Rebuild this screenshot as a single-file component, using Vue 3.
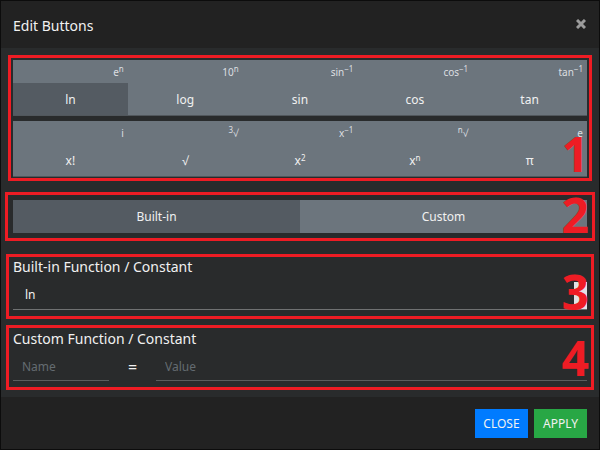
<script setup>
import { ref } from 'vue'

const keyRows = [
  [
    { shift: 'eⁿ', main: 'ln' },
    { shift: '10ⁿ', main: 'log' },
    { shift: 'sin⁻¹', main: 'sin' },
    { shift: 'cos⁻¹', main: 'cos' },
    { shift: 'tan⁻¹', main: 'tan' },
  ],
  [
    { shift: 'i', main: 'x!' },
    { shift: '³√', main: '√' },
    { shift: 'x⁻¹', main: 'x²' },
    { shift: 'ⁿ√', main: 'xⁿ' },
    { shift: 'e', main: 'π' },
  ],
]
const scripts = { 'ⁿ': 'n', '⁻': '−', '¹': '1', '²': '2', '³': '3' }

function runs(label) {
  return (label.match(/[ⁿ⁻¹²³]+|[^ⁿ⁻¹²³]+/g) || []).map((part) => ({
    raised: part[0] in scripts,
    text: [...part].map((c) => scripts[c] || c).join(''),
  }))
}

const selected = ref('ln')
const mode = ref('Built-in')
const builtin = ref('ln')
const name = ref('')
const value = ref('')
</script>

<template>
  <div class="dialog" role="dialog" aria-labelledby="dialog-title">
    <header class="header">
      <h1 id="dialog-title">Edit Buttons</h1>
      <button class="dismiss" type="button" aria-label="Close dialog">
        <svg viewBox="0 0 10 10" width="10" height="10"><path d="M1 1L9 9M9 1L1 9" /></svg>
      </button>
    </header>

    <main class="body">
      <section class="callout keys">
        <div v-for="(row, i) in keyRows" :key="i" class="key-row">
          <div v-for="key in row" :key="key.main" class="key">
            <button type="button" class="shift" :class="{ active: selected === key.shift }" @click="selected = key.shift"><component :is="r.raised ? 'sup' : 'span'" v-for="(r, n) in runs(key.shift)" :key="n">{{ r.text }}</component></button>
            <button type="button" class="main" :class="{ active: selected === key.main }" @click="selected = key.main"><component :is="r.raised ? 'sup' : 'span'" v-for="(r, n) in runs(key.main)" :key="n">{{ r.text }}</component></button>
          </div>
        </div>
        <span class="frame frame-keys"></span>
        <span class="number">1</span>
      </section>

      <section class="callout modes">
        <button v-for="m in ['Built-in', 'Custom']" :key="m" type="button" class="mode" :class="{ active: mode === m }" @click="mode = m">{{ m }}</button>
        <span class="frame frame-modes"></span>
        <span class="number">2</span>
      </section>

      <section class="callout builtin">
        <label for="builtin">Built-in Function / Constant</label>
        <div class="select">
          <select id="builtin" v-model="builtin">
            <option>ln</option>
            <option>log</option>
            <option>sin</option>
          </select>
          <span class="handle"></span>
        </div>
        <span class="frame frame-builtin"></span>
        <span class="number">3</span>
      </section>

      <section class="callout custom">
        <label for="custom-name">Custom Function / Constant</label>
        <div class="fields">
          <input id="custom-name" v-model="name" class="name" type="text" placeholder="Name" />
          <span class="equals">=</span>
          <input v-model="value" class="value" type="text" placeholder="Value" aria-label="Value" />
        </div>
        <span class="frame frame-custom"></span>
        <span class="number">4</span>
      </section>
    </main>

    <footer class="footer">
      <button type="button" class="close">CLOSE</button>
      <button type="button" class="apply">APPLY</button>
    </footer>
  </div>
</template>

<style>
body {
  margin: 0;
  background: #222222;
}
</style>

<style scoped>
* {
  box-sizing: border-box;
}
.dialog {
  display: flex;
  flex-direction: column;
  min-height: 100vh;
  border: 1px solid #0c0c0c;
  background: #222222;
  color: #f1f1f1;
  font: 12px/16px "Noto Sans", "Open Sans", sans-serif;
}
button,
input,
select {
  margin: 0;
  padding: 0;
  border: 0;
  border-radius: 0;
  background: none;
  color: inherit;
  font: inherit;
}
.header {
  display: flex;
  align-items: center;
  justify-content: space-between;
  height: 47px;
  padding: 2px 12px 0;
}
h1 {
  margin: 0;
  font-size: 14px;
  line-height: 20px;
  font-weight: 400;
}
.dismiss {
  display: flex;
  padding: 0 1px 3px;
}
.dismiss path {
  fill: none;
  stroke: #9b9b9b;
  stroke-width: 3;
}
.body {
  display: flex;
  flex-direction: column;
  padding: 12px 12px 16px;
  background: #292b2c;
}
.callout {
  position: relative;
}
.frame {
  position: absolute;
  border: 3px solid #ee1c24;
  pointer-events: none;
}
.frame-keys {
  inset: -5px -5px -4px;
}
.frame-modes {
  inset: -8px;
}
.frame-builtin {
  inset: -3px -7px -9px;
}
.frame-custom {
  inset: -4px -7px -9px;
}
.number {
  position: absolute;
  right: -2px;
  bottom: 6px;
  color: #ee1c24;
  font-family: "Open Sans", sans-serif;
  font-size: 48px;
  line-height: 34px;
  font-weight: 700;
  pointer-events: none;
}
.keys {
  display: flex;
  flex-direction: column;
  gap: 5px;
}
.key-row {
  display: flex;
  border-bottom: 1px solid #51575c;
  background: #6c757d;
}
.key {
  display: flex;
  flex: 1;
  flex-direction: column;
}
.shift {
  height: 23px;
  padding: 0 4px 0 0;
  color: #dcdfe1;
  font-size: 10px;
  text-align: right;
}
.main {
  height: 32px;
  padding-top: 2px;
}
sup {
  position: relative;
  top: -4px;
  font-size: 8px;
  line-height: 0;
  vertical-align: baseline;
}
.active {
  background: #545b62;
}
.modes {
  display: flex;
  margin-top: 23px;
  background: #6c757d;
}
.mode {
  flex: 1;
  height: 33px;
}
.modes .number {
  bottom: 1px;
}
.builtin {
  margin-top: 24px;
}
label {
  display: block;
  font-size: 14px;
  line-height: 20px;
}
.select {
  display: flex;
  align-items: center;
  height: 33px;
  padding-top: 4px;
  border-bottom: 1px solid #6f7172;
}
select {
  flex: 1;
  height: 28px;
  padding: 0 12px;
  appearance: none;
}
.handle {
  width: 13px;
  height: 27px;
  background: #e1e1e5;
}
.custom {
  margin-top: 19px;
}
.fields {
  display: flex;
  align-items: center;
}
input {
  height: 32px;
  padding: 4px 9px 0;
  border-bottom: 1px solid #5b5d5e;
}
input::placeholder {
  color: #646b71;
  opacity: 1;
}
.name {
  width: 96px;
}
.equals {
  width: 47px;
  padding-top: 4px;
  font-size: 16px;
  text-align: center;
}
.value {
  flex: 1;
  min-width: 0;
}
.builtin .number {
  bottom: 1px;
}
.footer {
  display: flex;
  justify-content: flex-end;
  gap: 6px;
  padding: 12px 12px 11px;
}
.footer button {
  width: 53px;
  height: 29px;
}
.close {
  background: #007bff;
}
.apply {
  background: #28a745;
}
</style>
